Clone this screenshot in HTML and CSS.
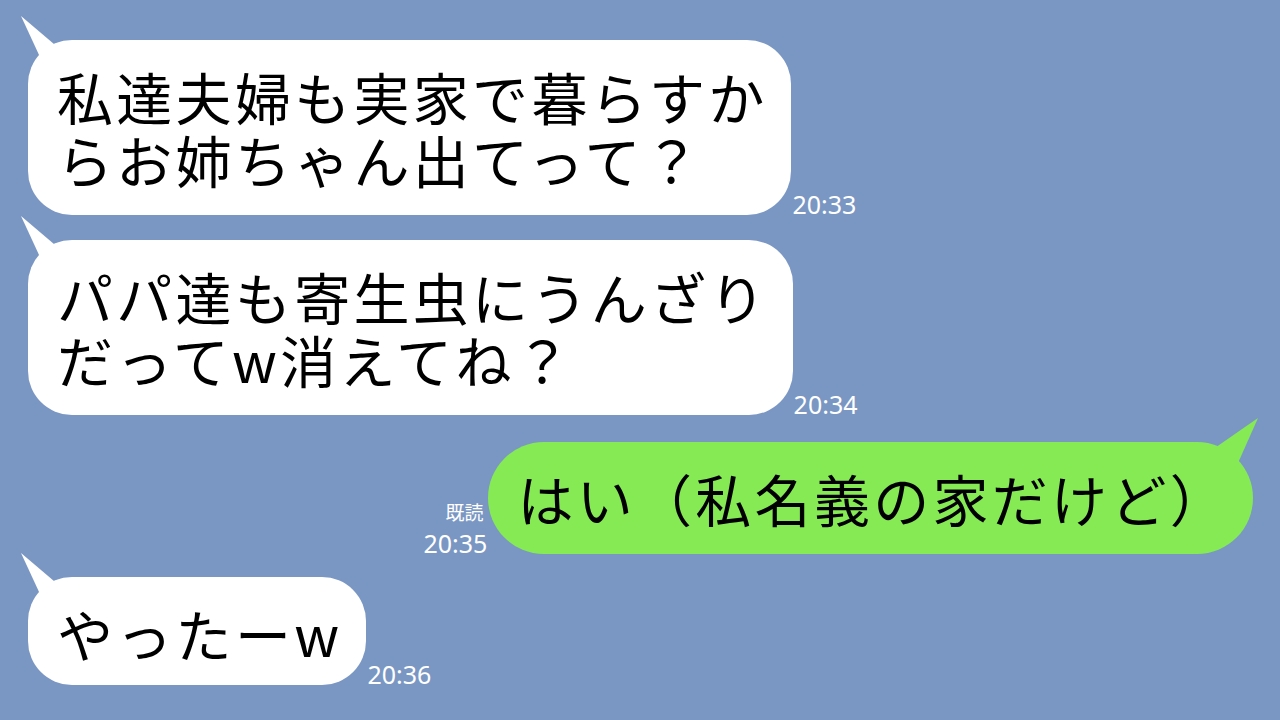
FILE: index.html
```html
<!DOCTYPE html>
<html lang="ja">
<head>
    <meta charset="UTF-8">
    <meta name="viewport" content="width=device-width, initial-scale=1.0">
    <title>トーク</title>
    <link rel="stylesheet" href="styles.css">
</head>
<body>
    <div class="chat">
        <div class="msg">
            <div class="bubble">
                <svg class="tail" width="50" height="60" viewBox="0 0 50 60"><polygon points="1,1 41,35 26,55" fill="#fff"/></svg>
                私達夫婦も実家で暮らすか<br>らお姉ちゃん出てって？
            </div>
            <div class="meta"><span class="time">20:33</span></div>
        </div>
        <div class="msg">
            <div class="bubble">
                <svg class="tail" width="50" height="60" viewBox="0 0 50 60"><polygon points="1,1 41,35 26,55" fill="#fff"/></svg>
                パパ達も寄生虫にうんざり<br>だってw消えてね？
            </div>
            <div class="meta"><span class="time">20:34</span></div>
        </div>
        <div class="msg mine">
            <div class="meta">
                <span class="read">既読</span>
                <span class="time">20:35</span>
            </div>
            <div class="bubble">
                <svg class="tail" width="50" height="60" viewBox="0 0 50 60"><polygon points="49,1 0,35 25,55" fill="#86ea55"/></svg>
                はい（私名義の家だけど）
            </div>
        </div>
        <div class="msg short">
            <div class="bubble">
                <svg class="tail" width="50" height="60" viewBox="0 0 50 60"><polygon points="1,1 41,35 26,55" fill="#fff"/></svg>
                やったーw
            </div>
            <div class="meta"><span class="time">20:36</span></div>
        </div>
    </div>
</body>
</html>
```

FILE: styles.css
```css
body {
    margin: 0;
    padding: 0;
    width: 1280px;
    height: 720px;
    overflow: hidden;
    background: #7a97c3;
    font-family: 'Noto Sans CJK JP', 'Noto Sans', sans-serif;
}
.chat {
    display: flex;
    flex-direction: column;
    padding: 15px 27px 0 28px;
}
.msg {
    display: flex;
    align-items: flex-end;
    padding-top: 25px;
}
.msg.mine {
    justify-content: flex-end;
    padding-top: 27px;
}
.msg.short {
    padding-top: 23px;
}
.bubble {
    position: relative;
    background: #fff;
    color: #000;
    font-size: 56px;
    letter-spacing: 3.3px;
    line-height: 63px;
    white-space: nowrap;
    padding: 24px 24px 25px 29px;
    border-radius: 44px;
}
.msg.short .bubble {
    padding-bottom: 21px;
}
.mine .bubble {
    background: #86ea55;
    border-radius: 56px;
}
.tail {
    position: absolute;
    left: -8px;
    top: -25px;
}
.mine .tail {
    left: auto;
    right: -6px;
}
.meta {
    display: flex;
    flex-direction: column;
    align-items: flex-end;
    color: #fff;
    padding: 0 1px;
}
.time {
    font-family: 'Noto Sans', sans-serif;
    font-size: 25px;
    line-height: 22px;
}
.read {
    font-size: 19px;
    line-height: 20px;
    padding-right: 4px;
    margin-bottom: 10px;
}
```
